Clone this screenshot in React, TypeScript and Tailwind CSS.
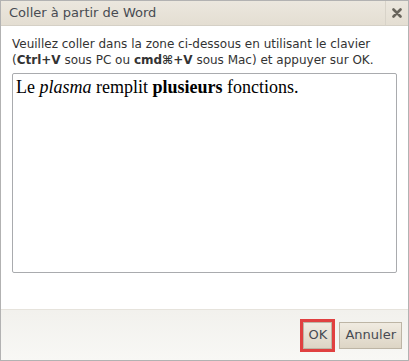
export default function App() {
  return (
    <div className="w-[409px] h-[361px] bg-white border border-[#b2b2b2] flex flex-col" style={{ fontFamily: '"DejaVu Sans", Verdana, sans-serif' }}>
      <div className="h-[25px] flex items-stretch border-b border-[#d5d0c6] bg-gradient-to-b from-[#ebe7de] to-[#e4ded2]">
        <div className="flex-1 pl-[8px] flex items-center text-[13px] text-[#474b52]">Coller à partir de Word</div>
        <div className="w-[23px] border-l border-[#d8d3c9] flex items-center justify-center">
          <svg width="10" height="10" viewBox="0 0 10 10">
            <path d="M1.5 1.5 L8.5 8.5 M8.5 1.5 L1.5 8.5" stroke="#68645c" strokeWidth="2.6" strokeLinecap="round" />
          </svg>
        </div>
      </div>
      <div className="flex-1 flex flex-col px-[11px] pt-[10px]">
        <div className="text-[12px] leading-[16px] text-[#333]">
          Veuillez coller dans la zone ci-dessous en utilisant le clavier (<b>Ctrl+V</b> sous PC ou <b>cmd⌘+V</b> sous Mac) et appuyer sur OK.
        </div>
        <div className="mt-[5px] h-[200px] border border-[#a9abae] rounded-[2px] px-[3px] pt-0 text-[18px] text-black" style={{ fontFamily: '"Liberation Serif", "Times New Roman", serif' }}>
          Le <i>plasma</i> remplit <b>plusieurs</b> fonctions.
        </div>
      </div>
      <div className="h-[51px] border-t border-[#e6e3dc] bg-gradient-to-b from-[#f2f1ed] to-[#f8f8f5] flex items-center justify-end pr-[6px] gap-[4px]">
        <div className="border-[3px] border-[#e04040] p-0">
          <div className="h-[27px] w-[29px] border border-[#bdb5a5] bg-gradient-to-b from-[#f0ebe1] to-[#ddd5c5] flex items-center justify-center text-[13px] text-[#474b52]">OK</div>
        </div>
        <div className="h-[27px] px-[5px] border border-[#bdb5a5] bg-gradient-to-b from-[#f0ebe1] to-[#ddd5c5] flex items-center justify-center text-[13px] text-[#474b52]">Annuler</div>
      </div>
    </div>
  );
}
